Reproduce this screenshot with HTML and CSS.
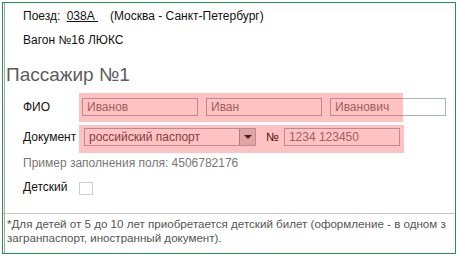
FILE: index.html
```html
<!DOCTYPE html>
<html lang="ru">

<head>
    <meta charset="UTF-8">
    <title>Пассажир №1</title>
    <link rel="stylesheet" href="styles.css">
</head>

<body>
    <div class="card">
        <div class="trip">Поезд: <u class="train">038A&nbsp;</u>(Москва - Санкт-Петербург)</div>
        <div class="car">Вагон №16 ЛЮКС</div>
        <h1 class="title">Пассажир №1</h1>

        <div class="row row-name">
            <span class="label">ФИО</span>
            <div class="fields">
                <input class="text" type="text" value="Иванов">
                <input class="text" type="text" value="Иван">
                <input class="text" type="text" value="Иванович">
            </div>
            <div class="mark mark-name"></div>
        </div>

        <div class="row row-doc">
            <span class="label">Документ</span>
            <div class="fields">
                <div class="select">
                    <span>российский паспорт</span>
                    <span class="arrow"></span>
                </div>
                <span class="num">№</span>
                <input class="text" type="text" value="1234 123450">
            </div>
            <div class="mark mark-doc"></div>
        </div>

        <div class="hint">Пример заполнения поля: 4506782176</div>

        <div class="child">
            <span class="label-short">Детский</span>
            <span class="check"></span>
        </div>

        <div class="note">
            <div>*Для детей от 5 до 10 лет приобретается детский билет (оформление - в одном з</div>
            <div>загранпаспорт, иностранный документ).</div>
        </div>
    </div>
</body>

</html>
```

FILE: styles.css
```css
body {
    margin: 0;
    font-family: "Liberation Sans", Arial, sans-serif;
    font-size: 12px;
    color: #111;
    background: #fff;
}

.card {
    width: 452px;
    height: 250px;
    margin: 2px 0 0 2px;
    border: 1px solid #1f9a4c;
    box-shadow: inset 1px 0 0 #fff, inset 2px 0 0 #a8a8a8;
    overflow: hidden;
}

.trip {
    padding-left: 20px;
    height: 26px;
    line-height: 26px;
}

.train {
    margin-left: 3px;
    margin-right: 12px;
}

.car {
    padding-left: 20px;
    height: 22px;
    line-height: 22px;
}

.title {
    margin: 10px 0 0;
    padding-left: 3px;
    height: 28px;
    line-height: 28px;
    font-size: 19px;
    font-weight: normal;
    color: #5c5c5c;
}

.row {
    position: relative;
    display: flex;
    align-items: center;
    height: 26px;
    padding-left: 20px;
    margin-top: 4px;
}

.row-name {
    margin-top: 5px;
}

.label {
    width: 59px;
}

.fields {
    display: flex;
    align-items: center;
    gap: 8px;
}

.text {
    width: 116px;
    height: 18px;
    box-sizing: border-box;
    margin: 0;
    padding: 0 4px;
    border: 1px solid #abb4bd;
    background: transparent;
    font: 12px "Liberation Sans", Arial, sans-serif;
    color: #808080;
    outline: none;
}

.select {
    display: flex;
    align-items: center;
    justify-content: space-between;
    width: 172px;
    height: 18px;
    box-sizing: border-box;
    margin-left: 2px;
    padding-left: 4px;
    border: 1px solid #abb4bd;
    color: #555;
}

.arrow {
    position: relative;
    width: 16px;
    height: 16px;
    box-sizing: border-box;
    border-left: 1px solid #9aa0a8;
    background: #d8d8d8;
}

.arrow::after {
    content: "";
    position: absolute;
    left: 4px;
    top: 6px;
    border-left: 4px solid transparent;
    border-right: 4px solid transparent;
    border-top: 4px solid #222;
}

.num {
    margin-left: 2px;
    margin-right: -3px;
}

.mark {
    position: absolute;
    left: 76px;
    background: rgba(255, 0, 0, 0.24);
    pointer-events: none;
}

.mark-name {
    width: 324px;
    top: -1px;
    bottom: -2px;
}

.mark-doc {
    width: 325px;
    top: 1px;
    bottom: -3px;
}

.hint {
    margin-top: 2px;
    padding-left: 20px;
    height: 22px;
    line-height: 22px;
    color: #777;
}

.child {
    display: flex;
    align-items: center;
    margin-top: 2px;
    padding-left: 20px;
    height: 22px;
}

.label-short {
    width: 56px;
}

.check {
    width: 14px;
    height: 13px;
    box-sizing: border-box;
    margin-top: 3px;
    border: 1px solid #cfcfcf;
    background: #fff;
}

.note {
    margin-top: 15px;
    padding: 3px 0 0 4px;
    border-top: 1px solid #c8c8c8;
    line-height: 14px;
    font-size: 11.6px;
    color: #555;
    white-space: nowrap;
}
```
